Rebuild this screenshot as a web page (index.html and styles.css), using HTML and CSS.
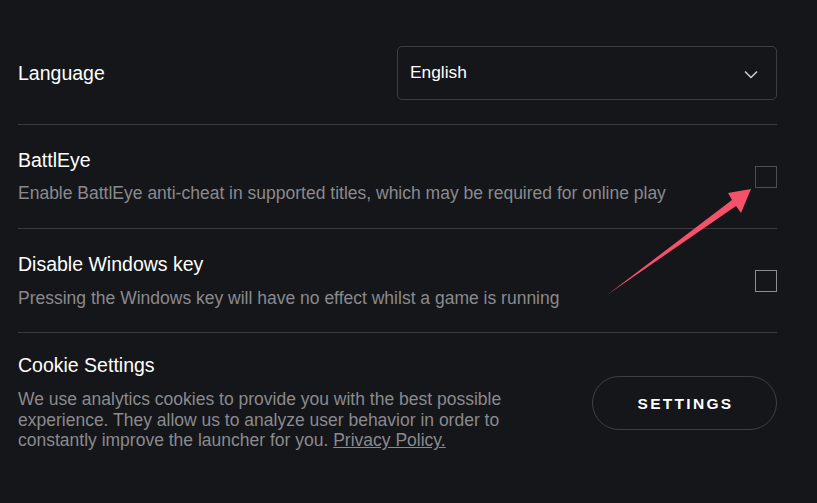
FILE: index.html
```html
<!DOCTYPE html>
<html lang="en">
<head>
<meta charset="utf-8">
<title>Settings</title>
<link rel="stylesheet" href="styles.css">
</head>
<body>
<main class="settings">
  <section class="row row-language">
    <div class="label">Language</div>
    <div class="select">
      <span class="select-value">English</span>
      <svg class="chevron" width="14" height="9" viewBox="0 0 14 9"><polyline points="1,1.5 7,7.5 13,1.5" fill="none" stroke="#cfcfd2" stroke-width="1.5"/></svg>
    </div>
  </section>
  <section class="row">
    <div class="text">
      <div class="title">BattlEye</div>
      <div class="desc">Enable BattlEye anti-cheat in supported titles, which may be required for online play</div>
    </div>
    <span class="checkbox checkbox-dim"></span>
  </section>
  <section class="row">
    <div class="text">
      <div class="title">Disable Windows key</div>
      <div class="desc">Pressing the Windows key will have no effect whilst a game is running</div>
    </div>
    <span class="checkbox"></span>
  </section>
  <section class="row row-cookie">
    <div class="text text-cookie">
      <div class="title">Cookie Settings</div>
      <p class="desc">We use analytics cookies to provide you with the best possible experience. They allow us to analyze user behavior in order to constantly improve the launcher for you. <a class="link" href="#">Privacy Policy.</a></p>
    </div>
    <button class="btn">SETTINGS</button>
  </section>
</main>
<svg class="arrow" width="817" height="503" viewBox="0 0 817 503">
  <polygon points="607,295 732,200 728,193 751,189 741,213 736,206" fill="#f5516b"/>
</svg>
</body>
</html>
```

FILE: styles.css
```css
html, body {
  margin: 0;
  padding: 0;
  background: #151619;
}
body {
  font-family: "Liberation Sans", Arial, sans-serif;
  color: #ffffff;
  width: 817px;
  height: 503px;
  overflow: hidden;
  position: relative;
}
.settings {
  padding: 22px 40px 0 18px;
}
.row {
  display: flex;
  align-items: center;
  justify-content: space-between;
  padding: 24px 0;
  border-bottom: 1px solid #3b3b3f;
}
.row-cookie {
  border-bottom: none;
  padding-top: 21px;
}
.label {
  font-size: 19.5px;
  line-height: 22.4px;
}
.select {
  box-sizing: border-box;
  width: 380px;
  height: 54px;
  border: 1px solid #3d3d41;
  border-radius: 5px;
  display: flex;
  align-items: center;
  justify-content: space-between;
  padding: 0 18px 2px 12px;
}
.select-value {
  font-size: 17.33px;
  line-height: 20px;
  margin-top: -1px;
}
.chevron {
  display: block;
  margin-top: 5px;
}
.title {
  font-size: 19.5px;
  line-height: 22.4px;
}
.desc {
  margin: 12px 0 0;
  font-size: 17.5px;
  line-height: 20.8px;
  color: #8a8a8e;
}
.text-cookie {
  width: 520px;
}
.link {
  color: #8a8a8e;
  text-decoration: underline;
}
.checkbox {
  box-sizing: border-box;
  width: 22px;
  height: 22px;
  border: 1px solid #8e8e90;
  flex: none;
}
.checkbox-dim {
  border-color: #4f4f52;
}
.btn {
  box-sizing: border-box;
  width: 185px;
  height: 54px;
  border: 1px solid #3f3f43;
  border-radius: 27px;
  background: transparent;
  color: #ffffff;
  font-family: "Liberation Sans", Arial, sans-serif;
  font-weight: bold;
  font-size: 15.5px;
  letter-spacing: 2.3px;
  padding: 3px 0 0 2px;
  flex: none;
}
.arrow {
  position: absolute;
  left: 0;
  top: 0;
  pointer-events: none;
}
```
